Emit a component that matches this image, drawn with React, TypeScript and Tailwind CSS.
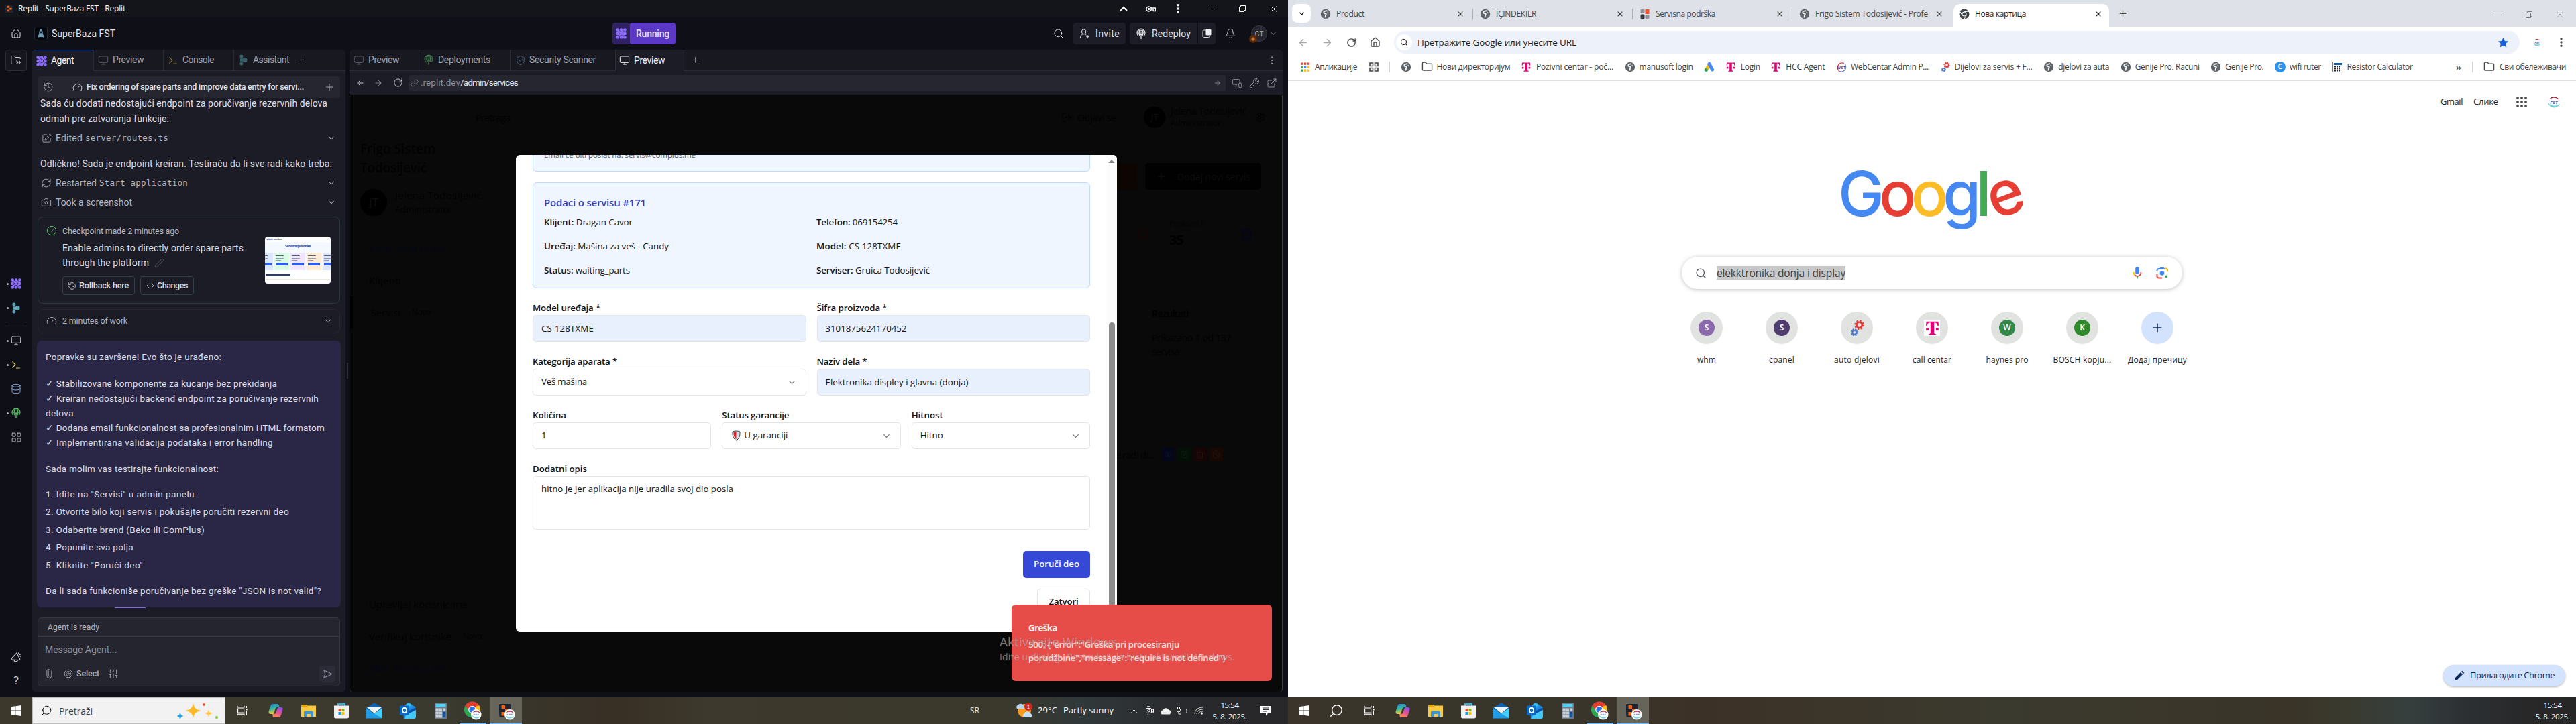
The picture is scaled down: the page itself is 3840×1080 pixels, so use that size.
import React, { useLayoutEffect, useRef, useState } from 'react';
import {
  House, Monitor, History, Gauge, Plus, SquarePen, RefreshCw, Camera, CircleCheck, Pencil, Code,
  ChevronDown, ChevronUp, Database, LayoutGrid, Paperclip, Target, SlidersVertical, SendHorizontal, Search,
  UserRoundPlus, Bell, ArrowLeft, ArrowRight, RotateCw, Link, MonitorSmartphone, Wrench, ExternalLink, ShieldCheck,
  LogOut, Settings, Building, CircleAlert, Eye, Trash2, Ban, EllipsisVertical, X, Folder,
} from 'lucide-react';

/* Text run that is tracked so that it fills exactly w pixels. */
function T({ w, className = '', children }: { w: number; className?: string; children: React.ReactNode }) {
  const ref = useRef<HTMLSpanElement>(null);
  const [ls, setLs] = useState(0);
  useLayoutEffect(() => {
    const el = ref.current;
    if (!el) return;
    el.style.letterSpacing = '0px';
    const natural = el.getBoundingClientRect().width;
    const n = (el.textContent || '').length || 1;
    const next = (w - natural) / n;
    el.style.letterSpacing = next + 'px';
    setLs(next);
  }, [w]);
  return (
    <span className={'block shrink-0 whitespace-pre ' + className} style={{ width: w }}>
      <span ref={ref} style={{ letterSpacing: ls }}>{children}</span>
    </span>
  );
}

/* ---------- Icons ---------- */

function AgentIcon({ size = 16 }: { size?: number }) {
  const p = [2.6, 8, 13.4];
  return (
    <svg width={size} height={size} viewBox="0 0 16 16" className="shrink-0" fill="#8b6cf6">
      {p.map((y) => p.map((x) => <circle key={x + '-' + y} cx={x} cy={y} r="2.4" />))}
      <path d="M2.6 2.6 8 8l-5.4 5.4M8 2.6 13.4 8 8 13.4" stroke="#8b6cf6" strokeWidth="2.2" fill="none" />
    </svg>
  );
}

function AssistantIcon({ className = '' }: { className?: string }) {
  return (
    <svg width="12" height="17" viewBox="0 0 12 17" className={'shrink-0 ' + className} fill="currentColor">
      <rect x="0.5" y="0.5" width="4.8" height="5" rx="2" />
      <rect x="0.5" y="11.5" width="4.8" height="5" rx="2" />
      <path d="M1 6.2h4l2.3-.7h2.2A2 2 0 0 1 11.500 7.500v2A2 2 0 0 1 9.500 11.500H7.300L5 10.800H1z" />
    </svg>
  );
}

function Prompt({ className = '' }: { className?: string }) {
  return (
    <svg width="14" height="14" viewBox="0 0 14 14" className={'shrink-0 ' + className} fill="none" stroke="currentColor" strokeWidth="1.2">
      <path d="M1.500 2.500 6 7l-4.500 4.500M7 12h6" />
    </svg>
  );
}

function DeployIcon({ className = '' }: { className?: string }) {
  return (
    <svg width="14" height="17" viewBox="0 0 14 17" className={'shrink-0 ' + className} fill="none" stroke="currentColor" strokeWidth="1.1">
      <path d="M3 11.500A6 6 0 1 1 11 11.500M1.200 7h11.600M2 3.800h10M4.500 10C3.500 6 4.500 2.500 7 1c2.500 1.500 3.500 5 2.500 9" />
      <path d="M7 16V8.500M4.300 11 7 8.300 9.700 11" strokeWidth="1.300" />
    </svg>
  );
}

function Globe() {
  return (
    <svg width="16" height="16" viewBox="0 0 16 16" className="shrink-0">
      <circle cx="8" cy="8" r="7.200" fill="#5f6368" />
      <path d="M9.500 3.200c-2.500.3-4.500 1-4.200 2.800.2 1.500 2.400 1 3.300 1.800.8.700-.2 1.400-.6 2.200-.3.800.2 1.600-.5 2.600" stroke="#f1f3f4" strokeWidth="1.900" fill="none" strokeLinecap="round" />
      <path d="M10.500 4.500c1 .4 1.700 1.200 2 2.500l-1.800-.4z" fill="#f1f3f4" />
    </svg>
  );
}

function TBadge({ size = 14 }: { size?: number }) {
  return (
    <svg width={size} height={size} viewBox="0 0 14 14" className="shrink-0" fill="#e20074">
      <path d="M1 .5h12l.3 4.300h-.9C12 2.500 11 1.500 8.800 1.500v9.300c0 1.500.6 2 2 2.100v.8H3.200v-.8c1.400-.1 2-.6 2-2.100V1.500C3 1.500 2 2.500 1.600 4.800H.7zM.8 6.800h2.600v2.600H.8zM10.600 6.800h2.600v2.600h-2.600z" />
    </svg>
  );
}

function Gears({ size = 16 }: { size?: number }) {
  return (
    <svg width={size} height={size} viewBox="0 0 24 24" className="shrink-0" fill="none">
      <circle cx="15" cy="7.500" r="4" stroke="#e53935" strokeWidth="2.600" />
      <circle cx="15" cy="7.500" r="6" stroke="#e53935" strokeWidth="2" strokeDasharray="2.400 2.300" />
      <circle cx="8" cy="18" r="2.800" stroke="#4a74c9" strokeWidth="2" />
      <circle cx="8" cy="18" r="4.500" stroke="#4a74c9" strokeWidth="1.600" strokeDasharray="2 1.600" />
    </svg>
  );
}

function FstBadge({ size = 16 }: { size?: number }) {
  return (
    <svg width={size} height={size} viewBox="0 0 24 24" className="shrink-0">
      <circle cx="12" cy="12" r="12" fill="#fff" />
      <path d="M5 7C9 1.500 17 2 20.500 8.500 16 4.500 11 4.500 5 7z" fill="#9b1b33" />
      <path d="M3 14.500c3 7.500 13 8.500 18 1.500-5.500 4-13 3.200-18-1.500z" fill="#6fd3d8" stroke="#6fd3d8" />
      <text x="12" y="15" fontSize="6.500" fontStyle="italic" fontWeight="700" textAnchor="middle" fill="#4358b8" fontFamily="Liberation Sans">FST</text>
    </svg>
  );
}

function ReplitMark({ size = 12 }: { size?: number }) {
  return (
    <svg width={size} height={size} viewBox="0 0 12 12" className="shrink-0">
      <rect width="12" height="12" rx="1.500" fill="#1c2333" />
      <path d="M2.500 1.800h3.700V4.700H2.500zM6.200 4.700h3.600v2.700H6.200zM2.500 7.400h3.700v2.900H2.500z" fill="#f26207" />
    </svg>
  );
}

function WinLogo() {
  return (
    <svg width="16" height="18" viewBox="0 0 16 18" fill="#fff">
      <path d="M0 3.200 6.500 2.300v6.200H0zM7.300 2.200 16 1v7.500H7.300zM0 9.300h6.500v6.300L0 14.700zM7.300 9.300H16V17l-8.700-1.200z" />
    </svg>
  );
}

function TaskView() {
  return (
    <svg width="16" height="16" viewBox="0 0 16 16" fill="none" stroke="#fff" strokeWidth="1.200">
      <path d="M1 .8v2h10v-2M1 15.200v-2h10v2M1.600 5h9v6h-9zM14.400 1v3M14.400 8.500V15" />
      <path d="M13.200 5h2.400v2.400h-2.400z" fill="#fff" stroke="none" />
    </svg>
  );
}

function Copilot() {
  return (
    <svg width="22" height="22" viewBox="0 0 22 22">
      <defs>
        <linearGradient id="cpA" x1="0" y1="0" x2="0.300" y2="1"><stop offset="0" stopColor="#2a7de1" /><stop offset=".5" stopColor="#2bb5a0" /><stop offset="1" stopColor="#f5c331" /></linearGradient>
        <linearGradient id="cpB" x1="0.700" y1="0" x2="0.300" y2="1"><stop offset="0" stopColor="#8f4de8" /><stop offset=".55" stopColor="#e6548f" /><stop offset="1" stopColor="#f7915b" /></linearGradient>
      </defs>
      <path d="M7 1h6c1.800 0 2.400 1.200 2.800 2.600L16.500 6h-3c-1.800 0-2.700 1-3.200 2.700L8.800 14c-.5 1.700-1.300 2-2.800 2H3.400C1.300 16 0 14.500.6 12L3.300 4C4 2 5 1 7 1z" fill="url(#cpA)" />
      <path d="M15 21H9.500c-1.800 0-2.700-1-3-2.600L6 16h2.600c1.600 0 2.500-.8 3-2.500l1.600-5c.5-1.700 1.300-2.500 2.800-2.500h2.600c2.100 0 3.400 1.500 2.800 4L18.700 18c-.7 2-1.700 3-3.700 3z" fill="url(#cpB)" />
    </svg>
  );
}

function Explorer() {
  return (
    <svg width="22" height="20" viewBox="0 0 22 20">
      <path d="M0 1h8l2 2H0z" fill="#d99a0b" />
      <path d="M0 2.500h22V19H0z" fill="#fbc93d" />
      <path d="M0 2.500h9V5H0z" fill="#e3a414" />
      <path d="M4 19v-6.500a2 2 0 0 1 2-2h10a2 2 0 0 1 2 2V19h-4v-4H8v4z" fill="#3a95dc" />
    </svg>
  );
}

function Store() {
  return (
    <svg width="24" height="24" viewBox="0 0 24 24">
      <path d="M7 5V2h10v3" fill="none" stroke="#25b0ea" strokeWidth="2" />
      <path d="M1 4.500h22V21a2.500 2.500 0 0 1-2.500 2.500h-17A2.500 2.500 0 0 1 1 21z" fill="#f1f1f3" />
      <path d="M7.500 9h4v4h-4z" fill="#f25022" /><path d="M12.500 9h4v4h-4z" fill="#7fba00" />
      <path d="M7.500 14h4v4h-4z" fill="#00a4ef" /><path d="M12.500 14h4v4h-4z" fill="#ffb900" />
    </svg>
  );
}

function MailIcon() {
  return (
    <svg width="24" height="24" viewBox="0 0 24 24">
      <path d="M0 8 12 0l12 8v4H0z" fill="#0f5fb3" />
      <path d="M1 7h22l-11 9z" fill="#f3f3f3" />
      <path d="M0 8l12 8.500L24 8v15.500H0z" fill="#1f9be6" />
      <path d="M24 8 12 16.500 24 23.500z" fill="#43d0fa" />
    </svg>
  );
}

function Outlook() {
  return (
    <svg width="24" height="24" viewBox="0 0 24 24">
      <path d="M5 6 13 0l11 7v13l-4 4H6z" fill="#1b8fe0" />
      <path d="M13 0l5 3.500L8 10 5 6z" fill="#35c0f0" />
      <path d="M24 7v8L10 20v-6z" fill="#0b4fa8" />
      <path d="M24 11v10a3 3 0 0 1-3 3H6l4-6z" fill="#43c9f7" />
      <rect x="0" y="4.500" width="14" height="14" rx="1.300" fill="#0a69c7" />
      <ellipse cx="7" cy="11.500" rx="3" ry="3.700" fill="none" stroke="#fff" strokeWidth="1.900" />
    </svg>
  );
}

function CalcIcon() {
  return (
    <svg width="18" height="24" viewBox="0 0 18 24">
      <rect width="18" height="24" rx="1" fill="#717a86" />
      <rect x="1.500" y="2" width="15" height="4.500" fill="#4fd0f5" />
      {[8.500, 13.500, 18.500].map((y) => [1.500, 6.800, 12].map((x) => <rect key={x + '_' + y} x={x} y={y} width="4.300" height="4" fill="#c9d0d8" />))}
      <rect x="12" y="13.500" width="4.500" height="9" fill="#13529b" />
    </svg>
  );
}

function MiniBadge({ x, y }: { x: number; y: number }) {
  return (
    <g transform={'translate(' + x + ' ' + y + ') scale(.65)'}>
      <circle cx="12" cy="12" r="12" fill="#fff" />
      <path d="M5 7C9 1.500 17 2 20.500 8.500 16 4.500 11 4.500 5 7z" fill="#9b1b33" stroke="#9b1b33" strokeWidth=".6" />
      <path d="M3.500 15c3 6.500 12 7.500 17.500 1.500-5 3.200-12 2.700-17.500-1.500z" fill="#6fd3d8" stroke="#6fd3d8" />
      <path d="M6 11.800h12" stroke="#8791d0" strokeWidth="2.500" strokeDasharray="3 1.500" />
    </g>
  );
}

function ChromeBadge() {
  return (
    <svg width="28" height="28" viewBox="0 0 28 28">
      <circle cx="13" cy="12.500" r="12" fill="#30a853" />
      <path d="M2.600 6.500a12 12 0 0 1 20.800 0L24 12H13L7 13z" fill="#e33b2e" />
      <path d="M23.400 6.500A12 12 0 0 1 13 24.500l5-9 1-8.500z" fill="#fbc116" />
      <circle cx="13" cy="12.500" r="5.800" fill="#fff" /><circle cx="13" cy="12.500" r="4.600" fill="#2f76e8" />
      <MiniBadge x={11} y={12} />
    </svg>
  );
}

function ReplitBadge() {
  return (
    <svg width="28" height="28" viewBox="0 0 28 28">
      <rect x="4" y="4" width="18" height="19" rx="2" fill="#1c2333" />
      <path d="M7.500 6h5.500v5H7.500zM13 11h5v5h-5zM7.500 16H13v5.500H7.500z" fill="#f26207" />
      <MiniBadge x={12} y={12} />
    </svg>
  );
}

function Restore({ className = '' }: { className?: string }) {
  return (
    <svg width="10" height="10" viewBox="0 0 10 10" className={'shrink-0 ' + className} fill="none" stroke="currentColor">
      <path d="M.5 2.500h7v7h-7zM2.500 2.500v-2h7v7h-2" />
    </svg>
  );
}

/* ---------- Replit: agent column ---------- */

function TitleBar() {
  return (
    <div className="flex h-[26px] items-center bg-[#14151a] pl-2 text-white font-['Open_Sans','Noto_Sans',sans-serif] text-[12px]">
      <ReplitMark />
      <T w={160} className="ml-[7px]">Replit - SuperBaza FST - Replit</T>
      <div className="ml-[1481px] flex items-center">
        <svg width="14" height="10" viewBox="0 0 14 10" fill="none" stroke="#fff" strokeWidth="2"><path d="M2 8l5-5 5 5" /></svg>
        <svg width="15" height="9" viewBox="0 0 15 9" fill="none" stroke="#fff" strokeWidth="1.300" className="ml-[26px]"><circle cx="4.500" cy="4.500" r="3.600" /><circle cx="4.500" cy="4.500" r="1" /><path d="M8 3h6.300v4.500h-3V5.800H8" /></svg>
        <EllipsisVertical size={18} className="ml-[24px]" strokeWidth={2.500} />
        <span className="ml-[36px] h-px w-[10px] bg-white" />
        <Restore className="ml-[36px]" />
        <X size={15} className="ml-[34px]" strokeWidth={1.500} />
      </div>
    </div>
  );
}

function ReplitHeader() {
  return (
    <div className="flex h-12 items-center text-[#e4e5ea] text-[14px]">
      <span className="flex w-12 justify-center"><House size={16} strokeWidth={1.500} /></span>
      <span className="ml-[3px] flex h-5 w-5 items-center justify-center rounded-[3px] border border-[#252b36] bg-[#05070f]">
        <svg width="12" height="14" viewBox="0 0 12 14"><path d="M6 0c2.500 2 3 4.500 2.800 8l2.200 2v3L8 12H4l-3 1v-3l2.200-2C3 4.500 3.500 2 6 0z" fill="#6d9db5" /><circle cx="6" cy="5" r="1.400" fill="#0b1a26" /></svg>
      </span>
      <T w={95} className="ml-[6px] text-[14px]">SuperBaza FST</T>
      <div className="ml-[741px] flex h-8 w-[94px] items-center overflow-hidden rounded-[4px] bg-[#2f2163]">
        <span className="flex w-[26px] justify-center"><AgentIcon size={16} /></span>
        <span className="flex h-8 flex-1 items-center rounded-[4px] bg-[#5b38c6] pl-[9px] text-[14px] font-medium text-[#e9e2fb]"><T w={50}>Running</T></span>
      </div>
      <Search size={16} strokeWidth={1.500} className="ml-[563px] mr-[14px]" />
      <div className="flex h-8 w-[78px] items-center rounded-[4px] bg-[#1c1d26] pl-[9px]"><UserRoundPlus size={16} strokeWidth={1.400} /><T w={36} className="ml-2">Invite</T></div>
      <div className="ml-[6px] flex h-8 w-[101px] items-center rounded-l-[4px] bg-[#1c1d26] pl-[10px]"><DeployIcon /><T w={58} className="ml-[9px]">Redeploy</T></div>
      <div className="ml-px flex h-8 w-[26px] items-center justify-center rounded-r-[4px] bg-[#1c1d26]">
        <svg width="14" height="14" viewBox="0 0 14 14"><path d="M8.500 12.500h-6a1.500 1.500 0 0 1-1.500-1.500V3.500A1.500 1.500 0 0 1 2.500 2h4M11 10v1a1.500 1.500 0 0 1-1.500 1.500h-2" fill="none" stroke="#d8d9df" /><rect x="5.500" y="0.500" width="8" height="9" rx="1.500" fill="#f0f0f4" /></svg>
      </div>
      <Bell size={16} strokeWidth={1.400} className="ml-[14px]" />
      <div className="relative ml-[23px] flex h-6 w-6 items-center justify-center rounded-full border border-[#3a3b48] bg-[#252630] text-[10px] text-[#a9abb6]">
        GT
        <span className="absolute -left-[4px] top-[13px] flex h-3 w-3 items-center justify-center rounded-full bg-[#5a2a05] text-[#ff8a2a]"><Plus size={8} strokeWidth={3} /></span>
      </div>
      <ChevronDown size={12} className="ml-[3px] text-[#8c8e9a]" />
    </div>
  );
}

function RailItem({ dot, children }: { dot?: boolean; children: React.ReactNode }) {
  return (
    <div className="relative flex h-9 w-12 items-center justify-center">
      {dot && <span className="absolute left-[10px] h-[3px] w-[3px] rounded-full bg-[#b9bac4]" />}
      {children}
    </div>
  );
}

function Rail() {
  return (
    <div className="flex w-12 shrink-0 flex-col items-center pb-[6px] text-[#c9cad3]">
      <div className="flex h-8 w-8 shrink-0 items-center justify-center rounded-[4px] border border-[#2b2c38] bg-[#15161e]">
        <svg width="16" height="16" viewBox="0 0 16 16" fill="none" stroke="currentColor" strokeWidth="1.100"><path d="M7 13.500H2A1.200 1.200 0 0 1 .8 12.300V2.700A1.200 1.200 0 0 1 2 1.500h3.500L7 3.500h6A1.200 1.200 0 0 1 14.200 4.700V6M8.500 8.500 11 11l-2.500 2.500M12 8.500l2.500 2.500-2.500 2.500" /></svg>
      </div>
      <div className="h-[299px] shrink-0" />
      <RailItem dot><AgentIcon size={16} /></RailItem>
      <RailItem dot><AssistantIcon className="text-[#5ea6b8]" /></RailItem>
      <div className="my-[6px] h-px w-6 shrink-0 bg-[#2b2c38]" />
      <RailItem dot><Monitor size={16} strokeWidth={1.400} /></RailItem>
      <RailItem dot><Prompt className="text-[#d9c25a]" /></RailItem>
      <RailItem><Database size={16} strokeWidth={1.400} className="text-[#8fb1e8]" /></RailItem>
      <RailItem dot><DeployIcon className="text-[#5fc56d]" /></RailItem>
      <RailItem><LayoutGrid size={17} strokeWidth={1.300} /></RailItem>
      <div className="flex-1" />
      <RailItem>
        <svg width="16" height="16" viewBox="0 0 16 16" fill="none" stroke="currentColor" strokeWidth="1.200" strokeLinejoin="round" strokeLinecap="round"><path d="M9 2 1 10.500c-.5.8 0 1.700 1 1.700l10.500.3c1 0 1.300-.8 1-1.500zM5 12.300c0 3.300 5 3.300 5.500.2M11.500 3l.5-1.500M13.200 4.700l1.500-1M14 7l1.300.2" /></svg>
      </RailItem>
      <RailItem><span className="text-[17px]">?</span></RailItem>
    </div>
  );
}

function Tab({ icon, w, className, active }: { icon: React.ReactNode; w: React.ReactNode; className: string; active?: boolean }) {
  return (
    <div className={'flex h-8 shrink-0 items-center border-r border-[#2b2c38] text-[14px] ' + (active ? 'bg-[#1c1c26] text-[#f4f4f7] ' : 'border-b text-[#a3a5b1] ') + className}>
      {icon}
      {w}
    </div>
  );
}

function Thumb() {
  const cards = ['bg-[#dbe7fb]', 'bg-[#dcfbe4]', 'bg-[#f1e4fd]', 'bg-[#fdebd3]', 'bg-[#dfe5fb]'];
  return (
    <div className="flex h-[70px] w-[98px] flex-col overflow-hidden rounded-[4px] bg-white">
      <div className="flex h-2 items-center pl-px"><T w={24} className="text-[4px] font-bold leading-none text-[#1e3a6e]">rvisni centar</T></div>
      <div className="flex h-[42px] flex-col items-center bg-[#f4f8ff] pt-[4px]">
        <T w={38} className="text-[5px] font-bold leading-none text-[#1e4aa8]">Servisiranje tehnike</T>
        <div className="mt-[2px] h-px w-[52px] bg-[#a8c0ea]" />
        <div className="mt-[5px] flex w-[118px] shrink-0 justify-center gap-[2px]">
          {cards.map((c) => (
            <div key={c} className={'flex h-[26px] w-[22px] shrink-0 flex-col px-[2px] pt-1 ' + c}>
              <span className="h-px w-3 bg-[#51627d]" /><span className="mt-[3px] h-px w-3 bg-[#8c9ab3]" /><span className="mt-[2px] h-px w-2 bg-[#8c9ab3]" />
              <span className="mt-[3px] h-1 w-[18px] bg-[#2f5fe0]" />
            </div>
          ))}
        </div>
      </div>
      <div className="flex flex-1 flex-col justify-center gap-[5px] px-px"><span className="h-[2px] w-[37px] bg-[#2b3d75]" /><span className="h-[2px] w-[96px] bg-[#eceae4]" /></div>
    </div>
  );
}

const steps: [string, number][] = [
  ['1. Idite na "Servisi" u admin panelu', 222],
  ['2. Otvorite bilo koji servis i pokušajte poručiti rezervni deo', 363],
  ['3. Odaberite brend (Beko ili ComPlus)', 237],
  ['4. Popunite sva polja', 131],
  ['5. Kliknite "Poruči deo"', 145],
];
const done: [string, number][] = [
  ['✓ Stabilizovane komponente za kucanje bez prekidanja', 345],
  ['✓ Kreiran nedostajući backend endpoint za poručivanje rezervnih', 407],
  ['delova', 42],
  ['✓ Dodana email funkcionalnost sa profesionalnim HTML formatom', 416],
  ['✓ Implementirana validacija podataka i error handling', 339],
];

function Agent() {
  return (
    <div className="flex w-[467px] shrink-0 flex-col overflow-hidden rounded-[5px] bg-[#1c1c26] text-[14px] text-[#dddee4]">
      <div className="flex h-8 shrink-0 bg-[#181820]">
        <Tab active className="w-[92px] border-t border-t-[#3b7cf0] pl-[6px]" icon={<AgentIcon />} w={<T w={34} className="ml-[6px]">Agent</T>} />
        <Tab className="w-[104px] pl-[6px]" icon={<Monitor size={16} strokeWidth={1.400} className="text-[#5c5e6b]" />} w={<T w={46} className="ml-[6px]">Preview</T>} />
        <Tab className="w-[105px] pl-[7px]" icon={<Prompt className="text-[#7d7039]" />} w={<T w={47} className="ml-[7px]">Console</T>} />
        <div className="flex h-8 flex-1 items-center border-b border-[#2b2c38] pl-[8px] text-[14px] text-[#a3a5b1]">
          <AssistantIcon className="text-[#33606c]" /><T w={54} className="ml-[8px]">Assistant</T><Plus size={13} strokeWidth={1.500} className="ml-[14px]" />
        </div>
      </div>
      <div className="flex flex-1 flex-col px-2">
        <div className="relative z-10 mt-2 flex h-8 shrink-0 items-center rounded-[4px] bg-[#25262f] pl-2 text-[12.500px] font-medium text-[#e2e3e8]">
          <History size={16} strokeWidth={1.400} className="text-[#a3a5b1]" />
          <Gauge size={15} strokeWidth={1.400} className="ml-[28px]" />
          <T w={324} className="ml-[6px]">Fix ordering of spare parts and improve data entry for servi...</T>
          <Plus size={16} strokeWidth={1.500} className="ml-[30px] text-[#a3a5b1]" />
        </div>
        <div className="-mt-[3px] flex flex-col pl-1 leading-[23px]">
          <T w={428}>Sada ću dodati nedostajući endpoint za poručivanje rezervnih delova</T>
          <T w={192}>odmah pre zatvaranja funkcije:</T>
        </div>
        <div className="mt-[5px] flex h-6 items-center pl-[6px] text-[#b3b5bf]">
          <SquarePen size={15} strokeWidth={1.300} /><T w={40} className="ml-[6px]">Edited</T><T w={124} className="ml-1 font-['DejaVu_Sans_Mono',monospace] text-[12.500px]">server/routes.ts</T>
          <ChevronDown size={14} strokeWidth={1.800} className="ml-auto mr-[6px]" />
        </div>
        <T w={435} className="ml-1 mt-[14px] leading-6">Odličkno! Sada je endpoint kreiran. Testiraću da li sve radi kako treba:</T>
        <div className="mt-[5px] flex h-6 items-center pl-[5px] text-[#b3b5bf]">
          <RefreshCw size={16} strokeWidth={1.300} /><T w={61} className="ml-[6px]">Restarted</T><T w={132} className="ml-1 font-['DejaVu_Sans_Mono',monospace] text-[12.500px]">Start application</T>
          <ChevronDown size={14} strokeWidth={1.800} className="ml-auto mr-[6px]" />
        </div>
        <div className="mt-[5px] flex h-6 items-center pl-[5px] text-[#b3b5bf]">
          <Camera size={16} strokeWidth={1.300} /><T w={114} className="ml-[6px]">Took a screenshot</T>
          <ChevronDown size={14} strokeWidth={1.800} className="ml-auto mr-[6px]" />
        </div>
        <div className="mt-[9px] flex h-[130px] shrink-0 rounded-[8px] border border-[#293a3c] pl-[12px]">
          <CircleCheck size={16} strokeWidth={1.500} className="mt-[12px] text-[#5fc56d]" />
          <div className="ml-[8px] flex w-[302px] flex-col pt-[12px]">
            <T w={174} className="text-[12.500px] leading-[18px] text-[#b3b5bf]">Checkpoint made 2 minutes ago</T>
            <T w={270} className="mt-[5px] leading-[22px]">Enable admins to directly order spare parts</T>
            <div className="flex items-center"><T w={129} className="leading-[22px]">through the platform</T><Pencil size={15} strokeWidth={1.200} className="ml-[8px] text-[#62646f]" /></div>
            <div className="mt-[9px] flex gap-2 text-[12.500px] font-medium">
              <div className="flex h-7 w-[108px] items-center rounded-[4px] border border-[#33404a] pl-[7px]"><History size={13} strokeWidth={1.500} /><T w={74} className="ml-[4px]">Rollback here</T></div>
              <div className="flex h-7 w-20 items-center rounded-[4px] border border-[#33404a] pl-[8px]"><Code size={12} strokeWidth={1.500} /><T w={46} className="ml-[4px]">Changes</T></div>
            </div>
          </div>
          <div className="mt-[29px]"><Thumb /></div>
        </div>
        <div className="mt-2 flex h-9 shrink-0 items-center rounded-[8px] border border-[#26272f] pl-[12px] text-[12.500px] text-[#b3b5bf]">
          <Gauge size={16} strokeWidth={1.400} /><T w={97} className="ml-[8px]">2 minutes of work</T>
          <ChevronDown size={14} strokeWidth={1.800} className="ml-auto mr-[10px]" />
        </div>
        <div className="relative -mx-px mt-[11px] flex h-[398px] shrink-0 flex-col rounded-[7px] bg-[#2a2645] pl-[13px] pt-[13px] text-[13.500px] leading-[22px]">
          <T w={262}>Popravke su završene! Evo što je urađeno:</T>
          <div className="mt-[18px]">{done.map(([t, w]) => <T key={t} w={w}>{t}</T>)}</div>
          <T w={258} className="mt-[17px]">Sada molim vas testirajte funkcionalnost:</T>
          <div className="mt-[14px] leading-[26.400px]">{steps.map(([t, w]) => <T key={t} w={w}>{t}</T>)}</div>
          <T w={411} className="mt-[14px]">Da li sada funkcioniše poručivanje bez greške "JSON is not valid"?</T>
          <span className="absolute -bottom-px left-[116px] h-px w-[46px] bg-[#8062e8]" />
        </div>
        <div className="mt-[15px] flex h-[103px] shrink-0 flex-col rounded-[6px] border border-[#353642] bg-[#24252e]">
          <div className="flex h-7 items-center border-b border-[#353642] pl-[14px] text-[12px] text-[#b3b5bf]"><T w={77}>Agent is ready</T></div>
          <T w={107} className="ml-[10px] mt-[8px] leading-[22px] text-[#8e909c]">Message Agent...</T>
          <div className="mt-[13px] flex h-6 items-center pl-[9px] text-[12.500px] text-[#b3b5bf]">
            <Paperclip size={14} strokeWidth={1.400} className="-rotate-45" /><Target size={14} strokeWidth={1.400} className="ml-[15px]" /><T w={34} className="ml-[5px] font-medium">Select</T>
            <SlidersVertical size={16} strokeWidth={1.300} className="ml-[13px]" />
            <span className="ml-auto mr-[6px] flex h-6 w-6 items-center justify-center rounded-[4px] bg-[#2b2c37]"><SendHorizontal size={15} strokeWidth={1.300} /></span>
          </div>
        </div>
      </div>
    </div>
  );
}

/* ---------- Replit: preview column ---------- */

const darkNav: [string, number, string][] = [
  ['Kontrolna tabla', 112, 'text-[#060616]'],
  ['Klijenti', 48, ''],
];

function DimmedApp() {
  return (
    <div className="flex h-full flex-col text-[#020202]">
      <div className="flex h-[66px] shrink-0 items-center pl-[187px] text-[14px]">
        <T w={52}>Pretraga</T>
        <LogOut size={16} className="ml-[821px]" /><T w={58} className="ml-[8px] font-medium">Odjavi se</T>
        <span className="ml-[41px] flex h-8 w-8 items-center justify-center rounded-full bg-black text-[13px] text-[#0e0e0e]">JT</span>
        <div className="ml-2"><T w={113} className="font-medium leading-[18px]">Jelena Todosijević</T><T w={75} className="text-[12px] leading-[18px]">Administrator</T></div>
        <Settings size={16} className="ml-[12px]" />
      </div>
      <div className="flex flex-1">
        <div className="flex w-[247px] shrink-0 flex-col">
          <div className="flex flex-col pl-[15px] text-[19px] font-semibold leading-[28px]"><T w={112}>Frigo Sistem</T><T w={99}>Todosijević</T></div>
          <div className="mt-[17px] flex items-center pl-[15px]"><span className="flex h-10 w-10 items-center justify-center rounded-full bg-black text-[#0e0e0e]">JT</span>
            <div className="ml-3"><T w={129} className="text-[15px] font-medium leading-[21px]">Jelena Todosijević</T><T w={85} className="text-[13px] leading-[20px]">Administrator</T></div></div>
          <div className="mt-[24px] flex flex-col pl-[28px] text-[15px] leading-[48px]">
            {darkNav.map(([t, w, c]) => <T key={t} w={w} className={'font-medium ' + c}>{t}</T>)}
          </div>
          <div className="flex h-12 items-center border-l-4 border-black pl-[27px] text-[15px]"><T w={44}>Servisi</T><T w={28} className="ml-[17px] text-[12px]">Novo</T></div>
          <div className="mt-auto flex flex-col pb-[11px] pl-[28px] text-[15px] leading-[48px]">
            <T w={147}>Upravljaj korisnicima</T>
            <div className="flex"><T w={123}>Verifikuj korisnike</T><T w={28} className="ml-[17px] text-[12px]">Novo</T></div>
            <T w={116} className="font-medium text-[#060616]">SMS Mobile API</T>
          </div>
        </div>
        <div className="flex flex-1 flex-col items-end pr-[31px] pt-[35px] text-[14px]">
          <div className="flex gap-3">
            <span className="h-10 w-[140px] rounded-[5px] bg-[#0d0501]" />
            <div className="flex h-10 w-[173px] items-center rounded-[5px] bg-[#010101] pl-[16px] font-medium text-[#0d0d0d]"><Plus size={16} /><T w={109} className="ml-4">Dodaj novi servis</T></div>
          </div>
          <div className="mt-[42px] flex w-[186px] items-center justify-between pr-[12px]">
            <CircleAlert size={19} className="text-[#180404]" />
            <div className="-ml-[20px]"><T w={56} className="text-[12px] text-[#040404]">Poslovni P.</T><T w={20} className="text-[20px] font-bold text-black">35</T></div>
            <Building size={19} className="text-[#050518]" />
          </div>
          <div className="mr-[45px] mt-[84px] w-[118px]"><T w={55} className="font-semibold text-black">Rezultati</T><T w={118} className="mt-[15px]">Prikazano 1 od 137</T><T w={41}>servisa</T></div>
          <div className="mr-[57px] mt-[133px] flex gap-1">
            <T w={66} className="mr-[6px]">ne radi di...</T>
            <span className="flex h-5 w-5 items-center justify-center rounded-[3px] bg-[#040619]"><Eye size={12} className="text-[#101226]" /></span>
            <span className="flex h-5 w-5 items-center justify-center rounded-[3px] bg-[#021006]"><SquarePen size={12} className="text-[#0c1a10]" /></span>
            <span className="flex h-5 w-5 items-center justify-center rounded-[3px] bg-[#170404]"><Trash2 size={12} className="text-[#241010]" /></span>
            <span className="flex h-5 w-5 items-center justify-center rounded-[3px] bg-[#170803]"><Ban size={12} className="text-[#24140c]" /></span>
          </div>
        </div>
      </div>
    </div>
  );
}

function Pair({ k, v, w }: { k: string; v: string; w: number }) {
  return <T w={w} className="leading-9"><span className="font-semibold">{k}</span> {v}</T>;
}

function Field({ label, lw, value, vw, className = '', filled, select, icon }: { label: string; lw: number; value: string; vw: number; className?: string; filled?: boolean; select?: boolean; icon?: React.ReactNode }) {
  return (
    <div className={className}>
      <T w={lw} className="h-5 font-semibold leading-[18px]">{label}</T>
      <div className={'flex h-10 items-center rounded-[5px] border border-[#e4e4e7] pl-3 ' + (filled ? 'bg-[#e8f0fe] pt-[2px]' : 'bg-white')}>
        {icon}
        <T w={vw}>{value}</T>
        {select && <ChevronDown size={15} strokeWidth={2} className="ml-auto mr-[13px] text-[#71717a]" />}
      </div>
    </div>
  );
}

function Modal() {
  return (
    <div className="absolute left-[248px] top-[89px] flex h-[712px] w-[896px] overflow-hidden rounded-[6px] bg-white text-[13.300px] text-[#111113]">
      <div className="ml-[25px] flex w-[831px] flex-col">
        <div className="h-[25px] shrink-0 overflow-hidden rounded-b-[6px] border border-t-0 border-[#bfdbfe] bg-[#eff6ff] pl-4"><T w={226} className="-mt-[9px] text-[11.500px] leading-[18px] text-[#4b5563]">Email će biti poslat na: servis@complus.me</T></div>
        <div className="mt-4 h-[158px] shrink-0 rounded-[6px] border border-[#bfdbfe] bg-[#eff6ff] pl-4 pt-[18px]">
          <T w={152} className="text-[15px] font-semibold leading-[22px] text-[#3440b4]">Podaci o servisu #171</T>
          <div className="grid grid-cols-[406px_1fr]">
            <Pair k="Klijent:" v="Dragan Cavor" w={132} /><Pair k="Telefon:" v="069154254" w={121} />
            <Pair k="Uređaj:" v="Mašina za veš - Candy" w={186} /><Pair k="Model:" v="CS 128TXME" w={126} />
            <Pair k="Status:" v="waiting_parts" w={128} /><Pair k="Serviser:" v="Gruica Todosijević" w={169} />
          </div>
        </div>
        <div className="mt-5 grid shrink-0 grid-cols-2 gap-x-4 gap-y-5">
          <Field label="Model uređaja *" lw={101} value="CS 128TXME" vw={78} filled />
          <Field label="Šifra proizvoda *" lw={105} value="3101875624170452" vw={121} filled />
          <Field label="Kategorija aparata *" lw={126} value="Veš mašina" vw={68} select />
          <Field label="Naziv dela *" lw={75} value="Elektronika displey i glavna (donja)" vw={213} filled />
        </div>
        <div className="mt-5 grid shrink-0 grid-cols-3 gap-4">
          <Field label="Količina" lw={50} value="1" vw={7} />
          <Field label="Status garancije" lw={100} value="U garanciji" vw={65} select icon={
            <svg width="13" height="16" viewBox="0 0 13 16" className="ml-[2px] mr-[5px]"><path d="M6.500 1C8.500 1 11 1.500 12 2.300c.5 6-1.500 10.500-5.500 12.700C2.500 12.800.5 8.300 1 2.300 2 1.500 4.500 1 6.500 1z" fill="#d9dbe0" stroke="#33363d" /><path d="M6.500 2.500v10.800C3.700 11.300 2.300 8 2.400 3.300 3.400 2.700 5 2.500 6.500 2.500z" fill="#e0262d" /></svg>} />
          <Field label="Hitnost" lw={47} value="Hitno" vw={34} select />
        </div>
        <div className="mt-5 shrink-0">
          <T w={81} className="h-5 font-semibold leading-[18px]">Dodatni opis</T>
          <div className="h-20 rounded-[5px] border border-[#e4e4e7] pl-3 pt-2"><T w={286} className="leading-5">hitno je jer aplikacija nije uradila svoj dio posla</T></div>
        </div>
        <div className="mt-8 flex flex-col items-end gap-4">
          <div className="flex h-10 w-[100px] items-center justify-center rounded-[5px] bg-[#3549d6] font-semibold text-white"><T w={68}>Poruči deo</T></div>
          <div className="flex h-10 w-[79px] items-center justify-center rounded-[5px] border border-[#e4e4e7] font-semibold"><T w={44}>Zatvori</T></div>
        </div>
      </div>
      <div className="ml-auto flex w-4 flex-col items-center bg-[#fcfcfc] pt-[7px]">
        <span className="h-0 w-0 border-x-[5px] border-b-[5px] border-x-transparent border-b-[#8b8b8b]" />
        <span className="mt-[238px] h-[440px] w-[9px] rounded-full bg-[#8b8b8b]" />
      </div>
    </div>
  );
}

function Toast() {
  return (
    <div className="absolute left-[987px] top-[760px] h-[114px] w-[388px] rounded-[6px] bg-[#e64c48] pl-[25px] pt-[25px] text-[13.300px] text-[#fdf0ef]">
      <T w={43} className="font-bold leading-5">Greška</T>
      <T w={225} className="mt-1 font-semibold leading-5 opacity-90">{'500: {"error":"Greška pri procesiranju'}</T>
      <T w={294} className="font-semibold leading-5 opacity-90">{'porudžbine","message":"require is not defined"}'}</T>
    </div>
  );
}

function Watermark() {
  return (
    <div className="absolute left-[969px] top-[801px] text-[#b5b5b5] opacity-65">
      <T w={175} className="text-[19px] leading-[28px]">Aktivirajte Windows</T>
      <T w={351} className="text-[14px] leading-[18px]">Idite u dijalog „Postavke“ da biste aktivirali Windows.</T>
    </div>
  );
}

function Preview() {
  const mon = <Monitor size={16} strokeWidth={1.400} className="text-[#5c5e6b]" />;
  return (
    <div className="flex w-[1391px] shrink-0 flex-col rounded-[5px] bg-[#1c1c26]">
      <div className="flex h-8 shrink-0 rounded-t-[5px] bg-[#181820]">
        <Tab className="w-[104px] pl-[6px]" icon={mon} w={<T w={46} className="ml-[6px]">Preview</T>} />
        <Tab className="w-[136px] pl-[7px]" icon={<DeployIcon className="text-[#3c7146]" />} w={<T w={78} className="ml-[7px]">Deployments</T>} />
        <Tab className="w-[157px] pl-[7px]" icon={<ShieldCheck size={16} strokeWidth={1.300} className="text-[#566a8a]" />} w={<T w={99} className="ml-[5px]">Security Scanner</T>} />
        <Tab active className="w-[102px] pl-[5px]" icon={<Monitor size={16} strokeWidth={1.500} />} w={<T w={46} className="ml-[6px]">Preview</T>} />
        <div className="flex flex-1 items-center border-b border-[#2b2c38] pl-[10px] text-[#a3a5b1]"><Plus size={13} strokeWidth={1.500} /><EllipsisVertical size={16} strokeWidth={1.500} className="ml-auto mr-[8px]" /></div>
      </div>
      <div className="flex h-9 shrink-0 items-center border-b border-[#2b2c38] pl-[9px] text-[13.500px] text-[#e4e5ea]">
        <ArrowLeft size={14} strokeWidth={1.500} /><ArrowRight size={14} strokeWidth={1.500} className="ml-[13px] text-[#8c8e9a]" /><RotateCw size={15} strokeWidth={1.400} className="ml-[15px]" />
        <div className="ml-[8px] flex h-6 w-[1218px] items-center rounded-[4px] bg-[#252630] pl-[3px]">
          <Link size={12} strokeWidth={1.300} className="text-[#8c8e9a]" /><T w={59} className="ml-[3px] text-[#8c8e9a]">.replit.dev</T><T w={86}>/admin/services</T>
          <ArrowRight size={12} strokeWidth={1.500} className="ml-auto mr-[6px] text-[#a3a5b1]" />
        </div>
        <div className="flex gap-[10px] pl-[9px] text-[#a3a5b1]"><MonitorSmartphone size={16} strokeWidth={1.300} /><Wrench size={16} strokeWidth={1.300} /><ExternalLink size={16} strokeWidth={1.300} /></div>
      </div>
      <div className="min-h-0 flex-1 overflow-hidden rounded-b-[4px] border-x border-[#3c3d45] bg-[#090909] font-['Open_Sans','Noto_Sans',sans-serif]"><DimmedApp /></div>
    </div>
  );
}

function Replit() {
  return (
    <div className="flex h-[1040px] w-[1920px] shrink-0 flex-col bg-[#0e0f17] font-[Roboto,'Noto_Sans',sans-serif]">
      <TitleBar />
      <ReplitHeader />
      <div className="flex min-h-0 flex-1">
        <Rail />
        <div className="flex pb-2">
          <Agent />
          <div className="flex w-[6px] flex-col items-center pt-[467px]"><span className="h-6 w-[2px] bg-[#2b2c38]" /></div>
          <div className="relative flex">
            <Preview />
            <div className="absolute left-0 top-[68px] font-['Open_Sans','Noto_Sans',sans-serif]"><Modal /><Toast /><Watermark /></div>
          </div>
        </div>
      </div>
    </div>
  );
}

/* ---------- Chrome ---------- */

function ChromeTab({ icon, title, w, active, bare }: { icon: React.ReactNode; title: string; w: number; active?: boolean; bare?: boolean }) {
  return (
    <div className={'flex w-[238px] shrink-0 items-center ' + (active ? 'h-[34px] self-end' : 'h-10 pt-[2px]')}>
      <div className={'flex h-full items-center ' + (active ? 'ml-[2px] w-[232px] rounded-t-[10px] bg-white pl-2 pb-[4px] text-[#1f1f1f]' : 'w-[237px] pl-[10px] text-[#474747]')}>
        {icon}
        <T w={w} className="ml-2">{title}</T>
        <X size={12} strokeWidth={2.200} className={'ml-auto ' + (active ? 'mr-[10px]' : 'mr-[12px]')} />
      </div>
      {!active && !bare && <span className="h-4 w-px bg-[#a9adb5]" />}
    </div>
  );
}

type Bm = { icon: React.ReactNode; t?: string; w?: number };

const WstIcon = (
  <svg width="16" height="16" viewBox="0 0 16 16" className="shrink-0" fill="none"><path d="M12 2.500A7 7 0 0 0 4 13.500" stroke="#dd3344" strokeWidth="1.300" /><path d="M4 14a7 7 0 0 0 9-10.500" stroke="#6d6fc0" strokeWidth="1.300" /><text x="8" y="10.500" fontSize="6" fontWeight="700" textAnchor="middle" fill="#55379a" fontFamily="Liberation Sans">WST</text></svg>
);
const FolderIcon = <Folder size={17} strokeWidth={1.900} className="-mx-px shrink-0 text-[#474747]" />;

const bookmarks: Bm[] = [
  { icon: FolderIcon, t: 'Нови директоријум', w: 110 },
  { icon: <span className="w-4"><TBadge /></span>, t: 'Pozivni centar - poč...', w: 115 },
  { icon: <Globe />, t: 'manusoft login', w: 80 },
  { icon: <svg width="16" height="16" viewBox="0 0 16 16" className="shrink-0"><path d="M8 4 4 11.500" stroke="#fbbc04" strokeWidth="5" strokeLinecap="round" /><path d="M8 3.500 12.500 12" stroke="#4285f4" strokeWidth="5" strokeLinecap="round" /><circle cx="3.300" cy="12.300" r="2.600" fill="#34a853" /></svg> },
  { icon: <span className="w-4"><TBadge /></span>, t: 'Login', w: 29 },
  { icon: <span className="w-4"><TBadge /></span>, t: 'HCC Agent', w: 58 },
  { icon: WstIcon, t: 'WebCentar Admin P...', w: 116 },
  { icon: <Gears />, t: 'Dijelovi za servis + F...', w: 116 },
  { icon: <Globe />, t: 'djelovi za auta', w: 76 },
  { icon: <Globe />, t: 'Genije Pro. Racuni', w: 96 },
  { icon: <Globe />, t: 'Genije Pro.', w: 57 },
  { icon: <span className="flex h-4 w-4 items-center justify-center rounded-full bg-[#2a93f5] text-[11px] font-bold text-white">C</span>, t: 'wifi ruter', w: 47 },
  { icon: <svg width="16" height="16" viewBox="0 0 16 16" className="shrink-0"><path d="M.5.5h15v15H.5z" fill="#fff" stroke="#777" /><path d="M2 2h12v3H2z" fill="#1559a8" /><path d="M3 7.500h10M3 10.500h10M3 13.500h10" stroke="#222" strokeWidth="1.800" strokeDasharray="2 1" /></svg>, t: 'Resistor Calculator', w: 98 },
];

function ChromeTop() {
  return (
    <>
      <div className="flex h-10 items-start bg-[#dee1e8] text-[12px]">
        <span className="ml-[6px] mt-[6px] flex h-7 w-7 items-center justify-center rounded-[8px] bg-white"><ChevronDown size={11} strokeWidth={3} /></span>
        <div className="ml-1 flex h-10">
          <ChromeTab icon={<Globe />} title="Product" w={42} />
          <ChromeTab icon={<Globe />} title="İÇİNDEKİLR" w={60} />
          <ChromeTab icon={<svg width="16" height="16" viewBox="0 0 16 16"><rect x="1.500" y="1" width="6" height="6" rx="1.500" fill="#8d9096" /><rect x="8.500" y="1" width="6" height="7" fill="#f0542c" /><rect x="1.500" y="8.500" width="6" height="6.500" rx="1.500" fill="#33353a" /><rect x="8.500" y="9" width="6" height="6" rx="1.500" fill="#8d9096" /></svg>} title="Servisna podrška" w={89} />
          <ChromeTab bare icon={<Globe />} title="Frigo Sistem Todosijević - Profe" w={168} />
          <ChromeTab active icon={<svg width="16" height="16" viewBox="0 0 16 16"><circle cx="8" cy="8" r="7.500" fill="#3f4246" /><circle cx="8" cy="8" r="3.600" fill="#fff" /><circle cx="8" cy="8" r="2.500" fill="#3f4246" /><path d="M8 4.300h7M4.900 9.800 1.500 4M11.200 9.800 8 15.500" stroke="#fff" /></svg>} title="Нова картица" w={76} />
        </div>
        <Plus size={15} strokeWidth={1.900} className="ml-[9px] mt-[13px] text-[#474747]" />
        <div className="ml-[547px] mt-[15px] flex items-center text-[#777a80]"><span className="h-px w-[10px] bg-[#777a80]" /><Restore className="ml-[36px]" /><X size={14} strokeWidth={1.100} className="ml-[34px]" /></div>
      </div>
      <div className="flex h-[46px] items-center bg-white text-[#474747]">
        <ArrowLeft size={17} className="ml-[14px] text-[#a6a8ab]" /><ArrowRight size={17} className="ml-[19px] text-[#a6a8ab]" /><RotateCw size={15} strokeWidth={2.300} className="ml-[20px]" /><House size={16} className="ml-[20px]" />
        <div className="ml-[20px] flex h-[34px] w-[1678px] items-center rounded-full bg-[#ecf1fa] pl-[3px] text-[13.500px] text-[#1f1f1f]">
          <span className="flex h-6 w-6 items-center justify-center rounded-full bg-white"><Search size={12} strokeWidth={2.200} /></span>
          <T w={237} className="ml-2">Претражите Google или унесите URL</T>
          <svg width="17" height="17" viewBox="0 0 20 20" className="ml-auto mr-[16px]"><path d="M10 1l2.700 6 6.500.6-4.900 4.300 1.500 6.400L10 14.900l-5.800 3.400 1.500-6.400L.8 7.600 7.300 7z" fill="#1a5fd8" /></svg>
        </div>
        <div className="ml-[19px]"><FstBadge size={14} /></div><EllipsisVertical size={18} strokeWidth={2.500} className="ml-[20px]" />
      </div>
      <div className="flex h-[35px] items-center gap-[16.600px] border-b border-[#dfe1e5] bg-white pb-[7px] pl-[17px] text-[12px] text-[#3c3f43]">
        <div className="flex items-center gap-[7px]">
          <svg width="16" height="16" viewBox="0 0 16 16">{['#ea4335', '#ea4335', '#ea4335', '#34a853', '#4285f4', '#fbbc04', '#34a853', '#fbbc04', '#fbbc04'].map((c, i) => <rect key={i} x={2 + (i % 3) * 5} y={1.500 + Math.floor(i / 3) * 5} width="3.300" height="3.300" fill={c} />)}</svg>
          <T w={63}>Апликације</T>
        </div>
        <svg width="16" height="16" viewBox="0 0 16 16" fill="none" stroke="#474747" strokeWidth="1.600"><path d="M2 2h4.500v4.500H2zM9.500 2H14v4.500H9.500zM2 9.500h4.500V14H2zM9.500 9.500H14V14H9.500z" /></svg>
        <span className="-mx-[1px] h-4 w-px bg-[#c7d5ee]" />
        <Globe />
        {bookmarks.map((b, i) => <div key={i} className="flex items-center gap-[6px]">{b.icon}{b.t && <T w={b.w || 10}>{b.t}</T>}</div>)}
        <span className="ml-auto text-[17px] leading-none">»</span>
        <span className="h-4 w-px bg-[#c7d5ee]" />
        <div className="mr-[15px] flex items-center gap-2">{FolderIcon}<T w={99}>Сви обележивачи</T></div>
      </div>
    </>
  );
}

function Letter({ c, bg }: { c: string; bg: string }) {
  return <span className={'flex h-6 w-6 items-center justify-center rounded-full text-[12px] font-semibold text-white ' + bg}>{c}</span>;
}

const shortcuts: { t: string; w: number; icon: React.ReactNode; bg?: string }[] = [
  { t: 'whm', w: 28, icon: <Letter c="S" bg="bg-[#8a69ad]" /> },
  { t: 'cpanel', w: 38, icon: <Letter c="S" bg="bg-[#4f3d70]" /> },
  { t: 'auto djelovi', w: 68, icon: <Gears size={25} /> },
  { t: 'call centar', w: 58, icon: <span className="flex h-6 w-6 items-center justify-center bg-white"><TBadge size={21} /></span> },
  { t: 'haynes pro', w: 63, icon: <Letter c="W" bg="bg-[#33884a]" /> },
  { t: 'BOSCH kopju...', w: 87, icon: <Letter c="K" bg="bg-[#2f8a2b]" /> },
  { t: 'Додај пречицу', w: 88, icon: <Plus size={20} strokeWidth={1.800} className="text-[#0b2357]" />, bg: 'bg-[#d3e3fd]' },
];

function NewTab() {
  return (
    <div className="relative flex flex-1 flex-col items-center bg-white text-[#1f1f1f]">
      <div className="flex h-[62px] w-full items-center justify-end pr-[22px] text-[13px]">
        <T w={33}>Gmail</T><T w={37} className="ml-4">Слике</T>
        <svg width="16" height="16" viewBox="0 0 16 16" className="ml-[27px]" fill="#474747">{[2, 8, 14].map((y) => [2, 8, 14].map((x) => <circle key={x + '.' + y} cx={x} cy={y} r="1.900" />))}</svg>
        <span className="ml-[29px]"><FstBadge size={22} /></span>
      </div>
      <div className="mt-[46px] flex h-[120px] w-[280px] items-center font-[Inter,sans-serif] text-[92px] font-medium leading-none">
        <T w={267}>
          <span className="text-[#4688f1]">G</span><span className="text-[#e63e32]">o</span><span className="text-[#fbbc25]">o</span><span className="text-[#4688f1]">g</span><span className="text-[#42a955]">l</span><span className="inline-block -rotate-[20deg] text-[#e63e32]">e</span>
        </T>
      </div>
      <div className="mt-[34px] flex h-12 w-[746px] items-center rounded-full bg-white pl-5 pr-[20px] text-[15.500px] text-[#3c3f43] shadow-[0_1px_6px_rgba(32,33,36,0.280)]">
        <Search size={17} strokeWidth={2} className="text-[#5f6368]" />
        <span className="ml-[15px] h-[21px] bg-[#c8c8c8] leading-[21px]"><T w={192}>elekktronika donja i display</T></span>
        <svg width="16" height="20" viewBox="0 0 16 20" className="ml-auto" fill="none" strokeWidth="1.800"><rect x="5.200" y="1" width="5.600" height="11" rx="2.800" fill="#4285f4" /><path d="M2.500 9A5.500 5.500 0 0 0 5 13.800" stroke="#fbbc04" /><path d="M4.500 13.500A5.500 5.500 0 0 0 13.500 9" stroke="#ea4335" /><path d="M8 15v3.500" stroke="#34a853" /></svg>
        <svg width="20" height="20" viewBox="0 0 20 20" className="ml-[19px]" fill="none" strokeWidth="2"><path d="M2.500 8V6.500A2.500 2.500 0 0 1 5 4h9" stroke="#4285f4" /><path d="M7 3.500h6" stroke="#4285f4" strokeWidth="3" /><path d="M14 4.200A2.600 2.600 0 0 1 17.500 8" stroke="#fbbc04" /><path d="M2.500 12v3A2.500 2.500 0 0 0 5 17.500h5" stroke="#ea4335" /><circle cx="10" cy="10.500" r="3.300" fill="#4285f4" /><circle cx="16" cy="15.500" r="1.900" fill="#34a853" /></svg>
      </div>
      <div className="mt-[34px] flex text-[12px]">
        {shortcuts.map((s) => (
          <div key={s.t} className="flex w-28 flex-col items-center">
            <span className={'flex h-12 w-12 items-center justify-center rounded-full ' + (s.bg || 'bg-[#e1e3e1]')}>{s.icon}</span>
            <T w={s.w} className="mt-[15px] leading-[18px]">{s.t}</T>
          </div>
        ))}
      </div>
      <div className="absolute bottom-4 right-4 flex h-8 w-[182px] items-center rounded-full bg-[#d3e3fd] pl-[16px] text-[13px] text-[#0b2357] shadow-[0_1px_3px_rgba(0,0,0,0.300)]">
        <svg width="16" height="16" viewBox="0 0 16 16" fill="#0b2357"><path d="M1.500 14.500v-3L10 3l3 3-8.500 8.500zM11 2l1.300-1.300 3 3L14 5z" /></svg>
        <T w={126} className="ml-2">Прилагодите Chrome</T>
      </div>
    </div>
  );
}

/* ---------- Taskbars ---------- */

function TaskApps() {
  return (
    <div className="flex h-10 shrink-0 items-center">
      <span className="flex w-[49px] justify-center"><TaskView /></span>
      <span className="flex w-[51px] justify-center"><Copilot /></span>
      <span className="flex w-[48px] justify-center"><Explorer /></span>
      <span className="flex w-[49px] justify-center"><Store /></span>
      <span className="flex w-[50px] justify-center"><MailIcon /></span>
      <span className="flex w-[49px] justify-center"><Outlook /></span>
      <span className="flex w-[49px] justify-center"><CalcIcon /></span>
      <span className="ml-[4px] flex h-10 w-10 items-center justify-center border-b-2 border-[#76b9ed] pt-[2px]"><ChromeBadge /></span>
      <span className="ml-[5px] flex h-10 w-12 items-center justify-center border-b-2 border-[#76b9ed] bg-[#67645a] pt-[2px]"><ReplitBadge /></span>
    </div>
  );
}

function Clock() {
  return (
    <div className="flex w-[52px] shrink-0 flex-col items-center text-[11.500px] leading-[17px] text-white">
      <T w={27}>15:54</T><T w={51}>5. 8. 2025.</T>
    </div>
  );
}

function TaskbarLeft() {
  return (
    <div className="flex h-10 items-center overflow-hidden bg-[linear-gradient(90deg,#3d382c_0%,#3b3a2e_35%,#382f25_48%,#3d392c_55%,#3a392c_78%,#31383a_84%,#292a2d_92%,#28272a_100%)]">
      <span className="flex w-12 shrink-0 justify-center"><WinLogo /></span>
      <div className="flex h-10 w-72 shrink-0 items-center border border-[#bdbdbd] bg-[#f2f2f2] pl-[11px] text-[14px] text-[#3d3d3d]">
        <Search size={18} strokeWidth={1.300} className="-scale-x-100 text-black" /><T w={50} className="ml-[10px]">Pretraži</T>
        <svg width="62" height="26" viewBox="0 0 62 26" className="ml-[126px]"><path d="M24 2c1.500 7 4 9.500 12 11-8 1.500-10.500 4-12 11-1.500-7-4-9.500-12-11 8-1.500 10.500-4 12-11z" fill="#fbb924" /><path d="M47 11c.8 4 2 5 6 6-4 1-5.200 2-6 6-.8-4-2-5-6-6 4-1 5.200-2 6-6z" fill="#fbc84a" /><path d="M4.500 17c.8 2.500 1.500 3.200 4 4-2.500.8-3.200 1.500-4 4-.8-2.500-1.500-3.200-4-4 2.500-.8 3.200-1.500 4-4z" fill="#1a9be6" stroke="#1a9be6" /><circle cx="40" cy="4" r="2" fill="#f0592a" /><circle cx="59" cy="23" r="2" fill="#7fc241" /></svg>
      </div>
      <TaskApps />
      <T w={14} className="ml-[668px] text-[12px] text-[#e4e4e4]">SR</T>
      <div className="ml-auto flex shrink-0 items-center">
        <svg width="26" height="24" viewBox="0 0 26 24"><circle cx="13" cy="12" r="10" fill="#f79a1c" /><path d="M2 9a4 4 0 0 1 2-6 5 5 0 0 1 8 2 2.500 2.500 0 0 1 1 4z" fill="#b9d6f5" /><path d="M12 22a3.500 3.500 0 0 1 1-6 5 5 0 0 1 9 0 3.500 3.500 0 0 1 1 6z" fill="#c3dcf7" /><circle cx="19" cy="6" r="6" fill="#c42b1c" /><text x="19" y="9" fontSize="8" fill="#fff" textAnchor="middle" fontFamily="Liberation Sans">1</text></svg>
        <T w={29} className="ml-[7px] text-[13px] text-white">29°C</T><T w={75} className="ml-[9px] text-[13px] text-white">Partly sunny</T>
      </div>
      <div className="ml-[23px] flex shrink-0 items-center text-white">
        <ChevronUp size={15} strokeWidth={1.600} />
        <svg width="14" height="14" viewBox="0 0 14 14" className="ml-[9px]" fill="none" stroke="#fff"><rect x="1.500" y="3.500" width="8" height="7" rx="1.500" /><circle cx="5.500" cy="7" r="1.800" /><path d="M9.500 6l3-1.500v5L9.500 8M3 1c1.600-.6 3.400-.6 5 0M3 13c1.600.6 3.400.6 5 0" /></svg>
        <svg width="17" height="11" viewBox="0 0 17 11" className="ml-[9px]"><path d="M3.500 10.500a3 3 0 0 1-.3-6 5.200 5.200 0 0 1 9.500-.5 3.400 3.400 0 0 1 .8 6.500z" fill="#ececec" /></svg>
        <svg width="17" height="12" viewBox="0 0 17 12" className="ml-[7px]" fill="none" stroke="#fff"><path d="M5.500 3.500h9.500v6H6M15.500 5.500v2M1.500 1v2M4.500 1v2M.5 3.500h5v2a2.500 2.500 0 0 1-5 0zM3 8v3h3" /></svg>
        <svg width="14" height="12" viewBox="0 0 14 12" className="ml-[9px]" fill="none" stroke="#ddd"><path d="M1 11C1 5 6 1 13 1M4 11c0-4 3-7 9-7M7 11c0-2.500 2-4 6-4" /><circle cx="11.500" cy="10" r="1.300" fill="#fff" /></svg>
      </div>
      <div className="ml-[13px] shrink-0"><Clock /></div>
      <svg width="16" height="15" viewBox="0 0 16 15" className="ml-[20px] shrink-0"><path d="M0 0h16v11h-5l-3 3.500V11H0z" fill="#fff" /><path d="M3 3h10M3 5.500h10M3 8h7" stroke="#2a2a2c" /></svg>
      <span className="ml-[20px] mr-[4px] h-10 w-px shrink-0 bg-[#77777a]" />
    </div>
  );
}

function TaskbarRight() {
  return (
    <div className="flex h-10 items-center overflow-hidden bg-[linear-gradient(90deg,#3a342a_0%,#38362b_20%,#3c3127_32%,#3b3a2e_55%,#3a3428_78%,#3a3a2e_82%,#363f3e_87%,#2d3134_91%,#282829_96%,#262627_100%)]">
      <span className="flex w-12 shrink-0 justify-center"><WinLogo /></span>
      <span className="flex w-12 shrink-0 justify-center"><Search size={22} strokeWidth={1.600} className="-scale-x-100 text-white" /></span>
      <TaskApps />
      <div className="ml-auto mr-[9px]"><Clock /></div>
    </div>
  );
}

export default function App() {
  return (
    <div className="flex h-[1080px] w-[3840px] overflow-hidden bg-white font-['Open_Sans','Noto_Sans',sans-serif]">
      <div className="flex w-[1920px] shrink-0 flex-col">
        <Replit />
        <TaskbarLeft />
      </div>
      <div className="flex w-[1920px] shrink-0 flex-col">
        <div className="flex h-[1040px] flex-col"><ChromeTop /><NewTab /></div>
        <TaskbarRight />
      </div>
    </div>
  );
}
